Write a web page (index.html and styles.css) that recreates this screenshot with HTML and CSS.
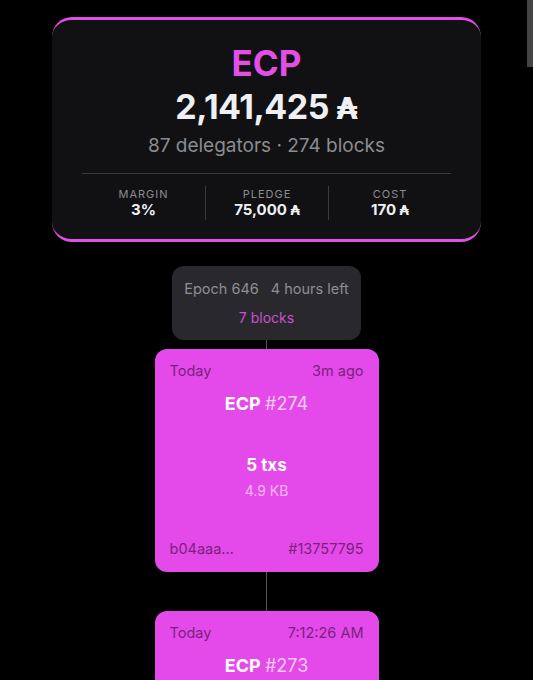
FILE: index.html
```html
<!DOCTYPE html>
<html>
<head>
<meta charset="utf-8">
<link rel="stylesheet" href="styles.css">
</head>
<body>
<div class="scroll-thumb"></div>
<main class="page">
  <section class="pool-card">
    <div class="pool-name">ECP</div>
    <div class="pool-stake">2,141,425 <span class="ada">₳</span></div>
    <div class="pool-sub">87 delegators · 274 blocks</div>
    <div class="stats">
      <div class="stat"><div class="stat-label">MARGIN</div><div class="stat-value">3%</div></div>
      <div class="stat"><div class="stat-label">PLEDGE</div><div class="stat-value">75,000 <span class="ada">₳</span></div></div>
      <div class="stat"><div class="stat-label">COST</div><div class="stat-value">170 <span class="ada">₳</span></div></div>
    </div>
  </section>

  <section class="epoch">
    <div class="epoch-top"><span>Epoch 646</span><span>4 hours left</span></div>
    <div class="epoch-blocks">7 blocks</div>
  </section>
  <div class="connector short"></div>

  <section class="block">
    <div class="block-row"><span>Today</span><span>3m ago</span></div>
    <div class="block-title">ECP <span class="num">#274</span></div>
    <div class="block-mid">
      <div class="txs">5 txs</div>
      <div class="size">4.9 KB</div>
    </div>
    <div class="block-row"><span>b04aaa…</span><span>#13757795</span></div>
  </section>
  <div class="connector long"></div>

  <section class="block">
    <div class="block-row"><span>Today</span><span>7:12:26 AM</span></div>
    <div class="block-title">ECP <span class="num">#273</span></div>
    <div class="block-mid">
      <div class="txs">3 txs</div>
      <div class="size">2.1 KB</div>
    </div>
    <div class="block-row"><span>a91c3e…</span><span>#13757612</span></div>
  </section>
</main>
</body>
</html>
```
FILE: styles.css
```css
html, body {
  margin: 0;
  padding: 0;
  background: #000;
  overflow: hidden;
}
body {
  font-family: Inter, "Noto Sans", "DejaVu Sans", sans-serif;
  color: #f2f2f4;
}
.scroll-thumb {
  position: fixed;
  top: 0;
  right: 0;
  width: 6px;
  height: 67px;
  background: #444;
}
.page {
  display: flex;
  flex-direction: column;
  align-items: center;
  padding-top: 17px;
}
.pool-card {
  width: 429px;
  box-sizing: border-box;
  background: #111113;
  border-top: 3px solid #e04fe6;
  border-bottom: 3px solid #e04fe6;
  border-radius: 20px;
  padding: 23px 30px 19px;
  display: flex;
  flex-direction: column;
  align-items: center;
}
.pool-name {
  font-size: 35px;
  line-height: 40px;
  font-weight: 700;
  color: #e24fe6;
}
.pool-stake {
  margin-top: 3px;
  font-size: 34px;
  line-height: 42px;
  font-weight: 700;
  color: #eef0f3;
  letter-spacing: -0.5px;
}
.ada {
  font-family: "DejaVu Sans", sans-serif;
  font-size: 0.9em;
  font-weight: 700;
  letter-spacing: 0;
}
.pool-sub {
  margin-top: 3px;
  font-size: 19px;
  line-height: 26px;
  color: #8b8c90;
}
.stats {
  margin-top: 14px;
  width: 100%;
  border-top: 1px solid #3a3a3e;
  padding-top: 12px;
  display: grid;
  grid-template-columns: 1fr 1fr 1fr;
}
.stat {
  display: flex;
  flex-direction: column;
  align-items: center;
  border-left: 1px solid #3a3a3e;
  padding: 1px 0 1px;
}
.stat:first-child { border-left: none; }
.stat-label {
  font-size: 11px;
  line-height: 14px;
  letter-spacing: 1px;
  color: #8b8c90;
}
.stat-value {
  margin-top: 0;
  font-size: 15px;
  line-height: 18px;
  font-weight: 700;
  color: #eef0f3;
}

.epoch {
  margin-top: 24px;
  width: 189px;
  height: 74px;
  box-sizing: border-box;
  background: #29282c;
  border-radius: 12px;
  display: flex;
  flex-direction: column;
  align-items: center;
  padding-top: 14px;
}
.epoch-top {
  display: flex;
  gap: 12px;
  font-size: 14.5px;
  line-height: 18px;
  color: #8e8e93;
}
.epoch-blocks {
  margin-top: 11px;
  font-size: 14px;
  line-height: 18px;
  color: #cc4fd2;
}
.connector {
  width: 1px;
  background: #555;
}
.connector.short { height: 9px; }
.connector.long { height: 39px; }

.block {
  width: 224px;
  height: 223px;
  box-sizing: border-box;
  background: #e44ae9;
  border-radius: 12px;
  padding: 13px 15px 14px;
  display: flex;
  flex-direction: column;
}
.block-row {
  display: flex;
  justify-content: space-between;
  font-size: 14.5px;
  line-height: 18px;
  color: #78227d;
}
.block-title {
  margin-top: 13px;
  text-align: center;
  font-size: 18px;
  line-height: 22px;
  font-weight: 700;
  color: #fff;
}
.block-title .num {
  font-weight: 400;
  color: rgba(255,255,255,0.72);
}
.block-mid {
  flex: 1;
  display: flex;
  flex-direction: column;
  align-items: center;
  justify-content: center;
  padding-bottom: 0;
}
.txs {
  font-size: 17px;
  line-height: 21px;
  font-weight: 700;
  color: #fff;
}
.size {
  margin-top: 6px;
  font-size: 14px;
  line-height: 18px;
  color: rgba(255,255,255,0.6);
}
```
